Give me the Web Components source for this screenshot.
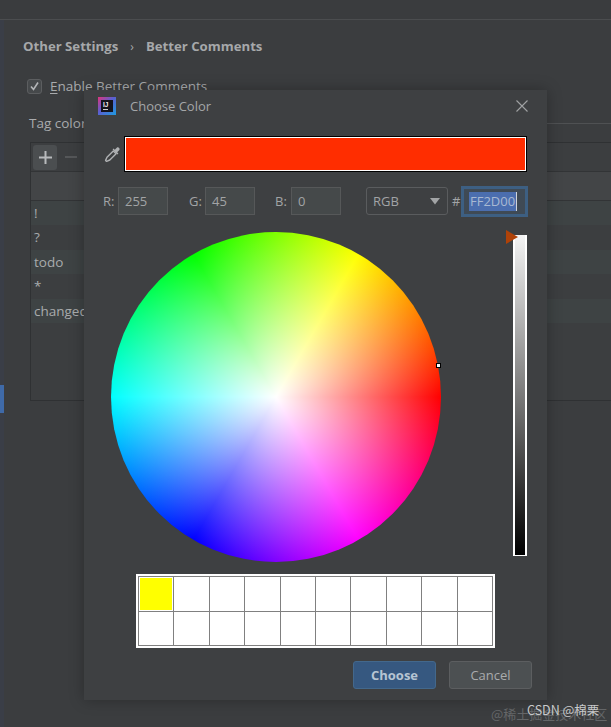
<!DOCTYPE html>
<html>
<head>
<meta charset="utf-8">
<title>Choose Color</title>
<style>
  html, body { margin: 0; padding: 0; background: #3b3d3f; }
  body { width: 611px; height: 727px; overflow: hidden; font-family: "Open Sans", "Noto Sans CJK SC", sans-serif; }
</style>
</head>
<body>
<settings-page>
  <color-dialog heading="Choose Color">
    <color-preview></color-preview>
    <rgb-row></rgb-row>
    <wheel-row></wheel-row>
    <swatch-grid></swatch-grid>
    <div slot="buttons">
      <ide-button primary>Choose</ide-button>
      <ide-button>Cancel</ide-button>
    </div>
  </color-dialog>
</settings-page>
<watermark-text></watermark-text>

<script>
class SettingsPage extends HTMLElement {
  connectedCallback() {
    this.attachShadow({ mode: 'open' });
    this.shadowRoot.innerHTML = `
      <style>
        :host { display: flex; position: relative; width: 611px; height: 727px; color: #a9abad; overflow: hidden; }
        .strip { width: 4px; flex: none; background: #3a3e47; padding-top: 385px; box-sizing: border-box; }
        .strip i { display: block; height: 28px; background: #3f6aa8; }
        .main { flex: 1; min-width: 0; }
        .top { height: 19px; border-bottom: 1px solid #4b4d4f; background: #3a3c3e; margin-left: -4px; }
        .crumbs { display: flex; align-items: center; height: 18px; margin: 17px 0 0 19px; font-size: 13.2px; font-weight: 700; color: #a6a8aa; }
        .crumbs span { margin: 0 12px; font-weight: 400; font-size: 12px; }
        .check { display: flex; align-items: center; gap: 8px; margin: 22px 0 0 23px; height: 18px; font-size: 13.5px; }
        .box { width: 15px; height: 15px; box-sizing: border-box; border: 1px solid #5c5e60; border-radius: 3px; background: #46494b; display: flex; }
        u { text-underline-offset: 2px; }
        .tags { display: flex; align-items: center; margin: 18px 0 0 25px; height: 20px; font-size: 13.5px; }
        .tags::after { content: ""; flex: 1; height: 1px; background: #4f5153; margin-left: 8px; }
        .table { margin: 9px 0 0 26px; height: 259px; border: 1px solid #2f3133; border-right: 0; box-sizing: border-box; background: #3c3e40; }
        .tools { display: flex; align-items: center; height: 28px; padding-left: 2px; border-bottom: 1px solid #323436; font-size: 22px; }
        .plus { width: 24px; height: 25px; border-radius: 3px; background: #4b4e50; color: #b4b6b8; display: flex; align-items: center; justify-content: center; }
        .plus svg { display: block; }
        .minus { width: 12px; height: 2px; background: #555759; margin-left: 8px; }
        .head { height: 28px; background: #434547; border-bottom: 1px solid #323436; }
        .row { height: 24.4px; line-height: 24px; padding-left: 3px; font-size: 13.5px; color: #a9abad; white-space: nowrap; }
        .row:nth-child(odd) { background: #3e4344; }
        .rows { height: 122px; }
      </style>
      <div class="strip"><i></i></div>
      <div class="main">
        <div class="top"></div>
        <div class="crumbs">Other Settings<span>›</span>Better Comments</div>
        <div class="check">
          <div class="box"><svg width="13" height="13" viewBox="0 0 13 13"><path d="M3 6.5 5.5 9.5 10 2.5" fill="none" stroke="#b4b6b8" stroke-width="1.6"/></svg></div>
          <div><u>E</u>nable Better Comments</div>
        </div>
        <div class="tags">Tag colors</div>
        <div class="table">
          <div class="tools">
            <div class="plus"><svg width="13" height="13" viewBox="0 0 13 13"><path d="M6.5 0v13M0 6.5h13" stroke="#b8babc" stroke-width="2"/></svg></div>
            <div class="minus"></div>
          </div>
          <div class="head"></div>
          <div class="rows">
            <div class="row">!</div>
            <div class="row">?</div>
            <div class="row">todo</div>
            <div class="row">*</div>
            <div class="row">changed</div>
          </div>
        </div>
      </div>
      <slot></slot>
    `;
  }
}

class ColorDialog extends HTMLElement {
  connectedCallback() {
    this.attachShadow({ mode: 'open' });
    this.shadowRoot.innerHTML = `
      <style>
        :host { position: absolute; left: 84px; top: 90px; width: 463px; height: 610px; display: flex; flex-direction: column; background: #3e4042; box-shadow: 0 0 14px rgba(0,0,0,.28); }
        .title { display: flex; align-items: center; height: 32px; flex: none; padding-left: 14px; font-size: 13px; color: #a4a6a8; }
        .logo { width: 18px; height: 18px; margin-right: 14px; display: block; }
        .close { margin-left: auto; margin-right: 19px; display: block; }
        .body { flex: 1; }
        ::slotted([slot="buttons"]) { display: flex; gap: 13px; justify-content: flex-end; padding: 0 15px 11px 0; }
      </style>
      <div class="title">
        <svg class="logo" viewBox="0 0 18 18">
          <defs><linearGradient id="lg" x1="0" y1="0" x2="1" y2="1"><stop offset="0" stop-color="#e0347c"/><stop offset=".45" stop-color="#5a5fd0"/><stop offset="1" stop-color="#1d9be0"/></linearGradient></defs>
          <rect width="18" height="18" fill="url(#lg)"/>
          <rect x="3" y="3" width="12" height="12" fill="#14131c"/>
          <text x="5" y="9.5" font-size="6.5" font-weight="700" font-family="Liberation Sans" fill="#f2f2f2">IJ</text>
          <rect x="5" y="12" width="5" height="1" fill="#cfcfcf"/>
        </svg>
        ${this.getAttribute('heading')}
        <svg class="close" width="12" height="12" viewBox="0 0 12 12"><path d="M.5.5l11 11M11.5.5l-11 11" stroke="#a0a2a4" stroke-width="1.1"/></svg>
      </div>
      <div class="body"><slot></slot></div>
      <slot name="buttons"></slot>
    `;
  }
}

class ColorPreview extends HTMLElement {
  connectedCallback() {
    this.attachShadow({ mode: 'open' });
    this.shadowRoot.innerHTML = `
      <style>
        :host { display: flex; align-items: center; height: 36px; margin-top: 14px; padding-left: 20px; }
        svg { width: 17px; height: 17px; margin-right: 3px; flex: none; }
        .bar { width: 403px; height: 36px; box-sizing: border-box; background: #ff2d00; border: 1px solid #000; box-shadow: inset 0 0 0 1px #fff; }
      </style>
      <svg viewBox="0 0 17 17">
        <path d="M3 11.2 9.3 4.9 12.1 7.7 5.8 14 2.6 15.4 1.6 14.4Z" fill="none" stroke="#afb1b3" stroke-width="1.4" stroke-linejoin="round"/>
        <path d="M8.6 3.6 13.4 8.4 14.4 7.4 13.2 6.2 15.4 4C16.4 2.8 14.2.6 13 1.6L10.8 3.8 9.6 2.6Z" fill="#afb1b3"/>
      </svg>
      <div class="bar"></div>
    `;
  }
}

class RgbRow extends HTMLElement {
  connectedCallback() {
    this.attachShadow({ mode: 'open' });
    this.shadowRoot.innerHTML = `
      <style>
        :host { display: flex; align-items: center; height: 28px; margin-top: 15px; padding-left: 19px; font-size: 13px; color: #a2a4a6; }
        label { flex: none; }
        .r { width: 15px; } .g { width: 16px; margin-left: 21px; } .b { width: 16px; margin-left: 20px; }
        .num { width: 50px; height: 28px; box-sizing: border-box; background: #45494a; border: 1px solid #565859; padding-left: 6px; line-height: 26px; }
        .combo { width: 82px; height: 28px; box-sizing: border-box; margin-left: 25px; border: 1px solid #5a5c5e; border-radius: 3px; display: flex; align-items: center; padding: 0 6px; }
        .combo svg { margin-left: auto; }
        .hash { margin-left: 4px; width: 9px; }
        .hex { width: 67px; height: 31px; flex: none; box-sizing: border-box; background: #3f4a55; border: 3px solid #3d5f82; padding: 3px 5px; line-height: 19px; }
        .hex span { display: inline-block; background: #4b6eaf; color: #a9b9d2; border-right: 1px solid #d0d4da; height: 19px; padding: 0 1px; }
      </style>
      <label class="r">R:</label><div class="num">255</div>
      <label class="g">G:</label><div class="num">45</div>
      <label class="b">B:</label><div class="num">0</div>
      <div class="combo">RGB<svg width="12" height="7" viewBox="0 0 12 7"><path d="M1 0h10L6 6.5Z" fill="#a2a4a6"/></svg></div>
      <div class="hash">#</div>
      <div class="hex"><span>FF2D00</span></div>
    `;
  }
}

class WheelRow extends HTMLElement {
  connectedCallback() {
    this.attachShadow({ mode: 'open' });
    this.shadowRoot.innerHTML = `
      <style>
        :host { display: flex; align-items: flex-start; margin-top: 17px; padding-left: 27px; height: 330px; }
        .wheel { position: relative; width: 330px; height: 330px; flex: none; border-radius: 50%;
          background:
            radial-gradient(circle closest-side, #fff 0%, rgba(255,255,255,0) 100%),
            conic-gradient(from 90deg, #f00, #f0f 60deg, #00f 120deg, #0ff 180deg, #0f0 240deg, #ff0 300deg, #f00 360deg); }
        .dot { position: absolute; left: 325px; top: 131px; width: 3px; height: 3px; background: #fff; border: 1px solid #000; }
        .bar { position: relative; width: 14px; height: 321px; margin: 3px 0 0 72px; box-sizing: border-box; border: solid #fff; border-width: 0 2px 1px; background: linear-gradient(#f4f4f4, #000); }
        .thumb { position: absolute; left: -9px; top: -5px; width: 0; height: 0; border-left: 12px solid #b04208; border-top: 7px solid transparent; border-bottom: 7px solid transparent; }
      </style>
      <div class="wheel"><div class="dot"></div></div>
      <div class="bar"><div class="thumb"></div></div>
    `;
  }
}

class SwatchGrid extends HTMLElement {
  connectedCallback() {
    this.attachShadow({ mode: 'open' });
    let cells = '';
    for (let i = 0; i < 20; i++) cells += i == 0 ? '<i class="on"></i>' : '<i></i>';
    this.shadowRoot.innerHTML = `
      <style>
        :host { display: block; width: 359px; height: 74px; margin: 12px 0 0 52px; box-sizing: border-box; border: 2px solid #fff; }
        .grid { display: grid; height: 100%; box-sizing: border-box; grid-template-columns: repeat(10, 1fr); grid-template-rows: 1fr 1fr; gap: 1px; background: #808080; border: 1px solid #808080; }
        i { display: block; background: #fff; }
        i.on { background: #ff0; border: 1px solid #fff; }
      </style>
      <div class="grid">${cells}</div>
    `;
  }
}

class IdeButton extends HTMLElement {
  connectedCallback() {
    this.attachShadow({ mode: 'open' });
    this.shadowRoot.innerHTML = `
      <style>
        :host { display: flex; align-items: center; justify-content: center; width: 83px; height: 28px; box-sizing: border-box; border-radius: 3px; font-size: 13px; background: #4c5052; border: 1px solid #5c5e60; color: #a9abad; }
        :host([primary]) { background: #365880; border-color: #43688c; color: #b6c5d3; font-weight: 700; }
      </style>
      <slot></slot>
    `;
  }
}

class WatermarkText extends HTMLElement {
  connectedCallback() {
    this.attachShadow({ mode: 'open' });
    this.shadowRoot.innerHTML = `
      <style>
        :host { position: absolute; left: 491px; top: 700px; width: 120px; height: 27px; font-family: "Noto Sans CJK SC", sans-serif; white-space: nowrap; }
        .a { position: absolute; left: 0; top: 4px; font-size: 13px; line-height: 20px; color: #646668; }
        .b { position: absolute; left: 36px; top: 1px; font-size: 12.5px; line-height: 18px; color: #c8c9ca; }
      </style>
      <div class="a">@稀土掘金技术社区</div>
      <div class="b">CSDN @棉栗</div>
    `;
  }
}

customElements.define('settings-page', SettingsPage);
customElements.define('color-dialog', ColorDialog);
customElements.define('color-preview', ColorPreview);
customElements.define('rgb-row', RgbRow);
customElements.define('wheel-row', WheelRow);
customElements.define('swatch-grid', SwatchGrid);
customElements.define('ide-button', IdeButton);
customElements.define('watermark-text', WatermarkText);
</script>
</body>
</html>
